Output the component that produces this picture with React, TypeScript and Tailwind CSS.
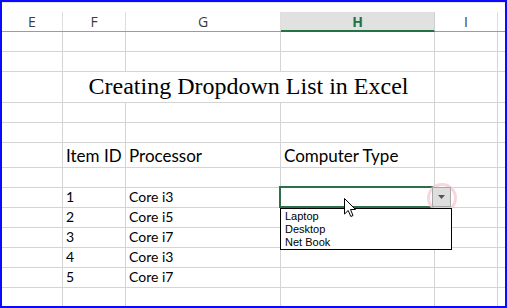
import React from 'react';

const cols = [
  { key: 'E', w: 'w-[61px]' },
  { key: 'F', w: 'w-[63px]' },
  { key: 'G', w: 'w-[155px]' },
  { key: 'H', w: 'w-[154px]' },
  { key: 'I', w: 'w-[63px]' },
];

const rows: { id: string; cpu: string }[] = [
  { id: '1', cpu: 'Core i3' },
  { id: '2', cpu: 'Core i5' },
  { id: '3', cpu: 'Core i7' },
  { id: '4', cpu: 'Core i3' },
  { id: '5', cpu: 'Core i7' },
];

const cellFont = { fontFamily: 'Lato, "Open Sans", sans-serif' };

// one plain grid row: cells with right + bottom grid lines
const Row: React.FC<{ h: string; cells?: (React.ReactNode | null)[]; text?: string }> = ({ h, cells = [], text = 'text-[14px]' }) => (
  <div className={`flex ${h} border-b border-[#d4d4d4]`}>
    {cols.map((c, i) => (
      <div
        key={c.key}
        className={`${c.w} shrink-0 border-r border-[#d4d4d4] flex items-end px-[3px] pb-[3px] leading-none text-black ${text}`}
        style={cellFont}
      >
        {cells[i]}
      </div>
    ))}
    <div className="flex-1" />
  </div>
);

const App: React.FC = () => {
  return (
    <div className="w-[507px] h-[308px] bg-white border-2 border-[#0a0aff] relative overflow-hidden">
      {/* strip above the column headers */}
      <div className="h-[10px] border-t border-[#e6e6e6]" />

      {/* column headers */}
      <div className="flex h-[20px] border-b border-[#9c9c9c]" style={{ fontFamily: '"Open Sans", sans-serif' }}>
        {cols.map((c) => (
          <div
            key={c.key}
            className={`${c.w} shrink-0 border-r flex items-center justify-center text-[14px] ${
              c.key === 'H'
                ? 'bg-[#e1e1e1] border-[#cfcfcf] text-[#217346] font-bold border-b-2 border-b-[#217346] -mb-px'
                : 'border-[#dedede] text-[#3c3c3c]'
            }`}
          >
            {c.key}
          </div>
        ))}
        <div className="flex-1" />
      </div>

      <Row h="h-[20px]" />
      <Row h="h-[20px]" />

      {/* merged title row F:H */}
      <div className="flex h-[31px] border-b border-[#d4d4d4]">
        <div className="w-[61px] shrink-0 border-r border-[#d4d4d4]" />
        <div
          className="w-[372px] shrink-0 border-r border-[#d4d4d4] flex items-end justify-center pb-[4px] text-[24px] leading-none text-black"
          style={{ fontFamily: '"Liberation Serif", "Times New Roman", serif' }}
        >
          Creating Dropdown List in Excel
        </div>
        <div className="w-[63px] shrink-0 border-r border-[#d4d4d4]" />
        <div className="flex-1" />
      </div>

      <Row h="h-[20px]" />
      <Row h="h-[20px]" />
      <Row h="h-[25px]" text="text-[17px]" cells={[null, 'Item ID', 'Processor', 'Computer Type']} />
      <Row h="h-[20px]" />
      {rows.map((r) => (
        <Row key={r.id} h="h-[20px]" cells={[null, r.id, r.cpu]} />
      ))}
      <Row h="h-[20px]" />

      {/* active cell H */}
      <div className="absolute left-[277px] top-[184px] w-[155px] h-[22px] border-2 border-[#2f6d4b]" />

      {/* highlight ring round the dropdown button */}
      <div className="absolute left-[425px] top-[181px] w-[30px] h-[30px] rounded-full border-[3px] border-[#f7ccd5] opacity-80" />

      {/* dropdown button */}
      <div className="absolute left-[430px] top-[185px] w-[19px] h-[20px] bg-[#dedede] border border-[#a6a6a6] flex items-center justify-center">
        <svg width="7" height="4" viewBox="0 0 7 4">
          <path d="M0 0 L7 0 L3.5 4 Z" fill="#555" />
        </svg>
      </div>

      {/* dropdown list */}
      <div
        className="absolute left-[278px] top-[206px] w-[172px] h-[42px] bg-white border border-black px-[4px] pt-[1px] text-[11px] leading-[13px] text-black"
        style={{ fontFamily: '"Liberation Sans", Arial, sans-serif' }}
      >
        <div>Laptop</div>
        <div>Desktop</div>
        <div>Net Book</div>
      </div>

      {/* mouse pointer */}
      <svg className="absolute left-[342px] top-[196px]" width="13" height="21" viewBox="0 0 13 21">
        <path d="M0.5 0.5 L0.5 16 L4.2 12.5 L6.8 18.5 L9 17.5 L6.5 11.5 L11.5 11.5 Z" fill="#fff" stroke="#000" strokeWidth="1" strokeLinejoin="round" />
      </svg>
    </div>
  );
};

export default App;
